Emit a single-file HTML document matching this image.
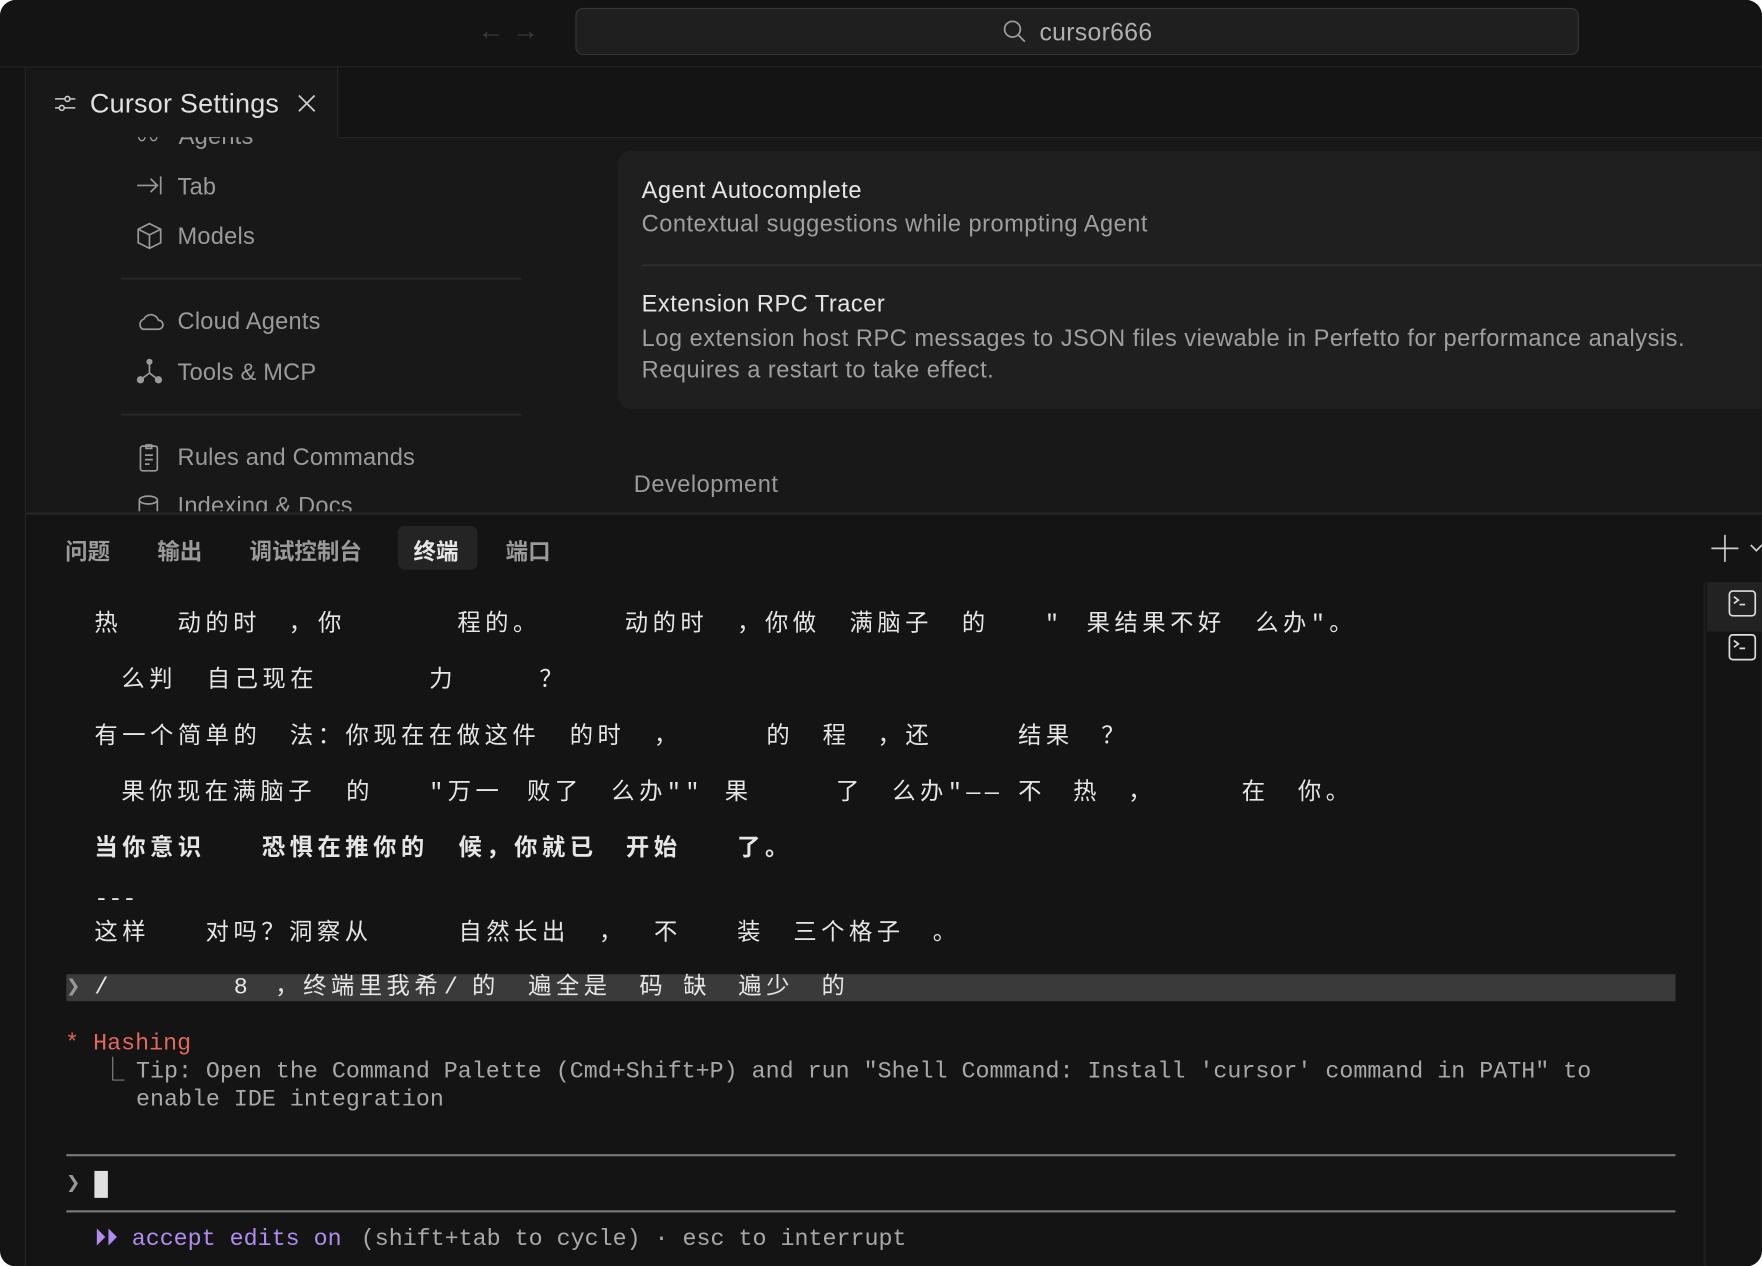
<!DOCTYPE html>
<html><head><meta charset="utf-8"><style>
html,body{margin:0;padding:0;width:1762px;height:1266px;overflow:hidden;background:#fff}
#w{position:absolute;left:0;top:0;width:1568px;height:1127px;transform:scale(1.12372);transform-origin:0 0;background:#141414;border-radius:14px;overflow:hidden;font-family:"Liberation Sans","Noto Sans CJK SC",sans-serif}
.a{position:absolute;white-space:pre}
.t{font-family:"Liberation Mono","Noto Sans CJK SC",monospace;font-size:20.75px;color:#e6e6e6;line-height:24px}
.c{letter-spacing:4px}
.side{color:#9a9a9a;font-size:21px;letter-spacing:0.2px}
.d{font-size:21px;letter-spacing:0.45px}
svg{position:absolute}
</style></head><body><div id="w">
<div class="a" style="left:0;top:0;width:1568px;height:59px;background:#141414;border-bottom:1px solid #262626"></div>
<div class="a" style="left:425px;top:14px;color:#3c3c3c;font-size:24px">← →</div>
<div class="a" style="left:512px;top:7px;width:891px;height:40px;background:#1f1f1f;border:1px solid #363636;border-radius:7px"></div>
<svg style="left:892px;top:17px" width="22" height="22" viewBox="0 0 22 22"><circle cx="9" cy="9" r="7" fill="none" stroke="#9a9a9a" stroke-width="1.6"/><path d="M14 14l6 6" stroke="#9a9a9a" stroke-width="1.6"/></svg>
<div class="a" style="left:925px;top:16px;color:#b0b0b0;font-size:22px;letter-spacing:0.3px">cursor666</div>
<div class="a" style="left:22px;top:60px;width:1px;height:1067px;background:#262626"></div>
<div class="a" style="left:23px;top:60px;width:1545px;height:396px;background:#181818"></div>
<div class="a" style="left:300px;top:60px;width:1268px;height:62px;background:#141414;border-left:1px solid #262626;border-bottom:1px solid #262626"></div>
<svg style="left:48px;top:82px" width="20" height="20" viewBox="0 0 20 20" fill="none" stroke="#ccc" stroke-width="1.4"><path d="M1 6h18M1 14h18"/><circle cx="12" cy="6" r="2.2" fill="#181818"/><circle cx="7" cy="14" r="2.2" fill="#181818"/></svg>
<div class="a" style="left:80px;top:79px;color:#e0e0e0;font-size:24px;letter-spacing:0.2px">Cursor Settings</div>
<svg style="left:264px;top:83px" width="18" height="18"><path d="M2 2l14 14M16 2L2 16" stroke="#ccc" stroke-width="1.6"/></svg>
<div class="a" style="left:23px;top:122px;width:480px;height:334px;overflow:hidden">
 <div class="a side" style="left:136px;top:-12px">Agents</div>
 <div class="a side" style="left:98px;top:-14px">〰</div>
</div>
<svg style="left:121px;top:154px" width="24" height="22" fill="none" stroke="#999" stroke-width="1.5"><path d="M1 11h18M13 5l6 6-6 6M22 3v16"/></svg>
<div class="a side" style="left:158px;top:155px">Tab</div>
<svg style="left:121px;top:197px" width="24" height="26" fill="none" stroke="#999" stroke-width="1.5"><path d="M12 2l10 5v12l-10 5-10-5V7zM2 7l10 5 10-5M12 12v12"/></svg>
<div class="a side" style="left:158px;top:199px">Models</div>
<div class="a" style="left:108px;top:247px;width:356px;height:2px;background:#262626"></div>
<svg style="left:121px;top:276px" width="26" height="20" fill="none" stroke="#999" stroke-width="1.5"><path d="M6 17h14a4 4 0 0 0 0-8 7 7 0 0 0-13-1 5 5 0 0 0-1 9z"/></svg>
<div class="a side" style="left:158px;top:275px">Cloud Agents</div>
<svg style="left:121px;top:319px" width="26" height="24" fill="none" stroke="#999" stroke-width="1.5"><path d="M12 3v10M12 13l-8 6M12 13l8 6"/><circle cx="12" cy="3" r="2" fill="#999"/><circle cx="4" cy="19" r="2.5" fill="#999"/><circle cx="20" cy="19" r="2.5" fill="#999"/></svg>
<div class="a side" style="left:158px;top:320px">Tools &amp; MCP</div>
<div class="a" style="left:108px;top:368px;width:356px;height:2px;background:#262626"></div>
<svg style="left:121px;top:393px" width="24" height="28" fill="none" stroke="#999" stroke-width="1.5"><rect x="4" y="4" width="15" height="22" rx="2"/><path d="M9 3h5v3H9zM8 12h7M8 16h7M8 20h4"/></svg>
<div class="a side" style="left:158px;top:396px">Rules and Commands</div>
<div class="a" style="left:100px;top:434px;width:400px;height:21px;overflow:hidden">
 <div class="a side" style="left:58px;top:5px">Indexing &amp; Docs</div>
 <svg style="left:22px;top:6px" width="22" height="20" fill="none" stroke="#999" stroke-width="1.5"><ellipse cx="10" cy="5" rx="8" ry="3.5"/><path d="M2 5v12M18 5v12"/></svg>
</div>
<div class="a" style="left:550px;top:134px;width:1030px;height:230px;background:#1f1f1f;border-radius:12px"></div>
<div class="a d" style="left:571px;top:158px;color:#e6e6e6">Agent Autocomplete</div>
<div class="a d" style="left:571px;top:188px;color:#9f9f9f">Contextual suggestions while prompting Agent</div>
<div class="a" style="left:571px;top:235px;width:1000px;height:2px;background:#2c2c2c"></div>
<div class="a d" style="left:571px;top:259px;color:#e6e6e6">Extension RPC Tracer</div>
<div class="a d" style="left:571px;top:290px;color:#9f9f9f">Log extension host RPC messages to JSON files viewable in Perfetto for performance analysis.</div>
<div class="a d" style="left:571px;top:318px;color:#9f9f9f">Requires a restart to take effect.</div>
<div class="a d" style="left:564px;top:420px;color:#9a9a9a">Development</div>
<div class="a" style="left:23px;top:456px;width:1545px;height:2px;background:#262626"></div>
<div class="a" style="left:354px;top:468px;width:71px;height:39px;background:#242424;border-radius:6px"></div>
<div class="a" style="left:58px;top:475px;color:#9a9a9a;font-size:20px;font-weight:bold">问题</div>
<div class="a" style="left:140px;top:475px;color:#9a9a9a;font-size:20px;font-weight:bold">输出</div>
<div class="a" style="left:222px;top:475px;color:#9a9a9a;font-size:20px;font-weight:bold">调试控制台</div>
<div class="a" style="left:368px;top:475px;color:#e6e6e6;font-size:20px;font-weight:bold">终端</div>
<div class="a" style="left:450px;top:475px;color:#9a9a9a;font-size:20px;font-weight:bold">端口</div>
<svg style="left:1522px;top:475px" width="46" height="26" fill="none" stroke="#ccc" stroke-width="1.5"><path d="M13 1v24M1 13h24M36 10l5 5 5-5"/></svg>
<div class="a" style="left:1516px;top:518px;width:2px;height:609px;background:#1e1e1e"></div>
<div class="a" style="left:1519px;top:518px;width:49px;height:44px;background:#222"></div>
<svg style="left:1538px;top:525px" width="26" height="24" fill="none" stroke="#ddd" stroke-width="1.5"><rect x="1" y="1" width="23" height="22" rx="3"/><path d="M5 6l4 3-4 3M10 13h5"/></svg>
<svg style="left:1538px;top:564px" width="26" height="24" fill="none" stroke="#ddd" stroke-width="1.5"><rect x="1" y="1" width="23" height="22" rx="3"/><path d="M5 6l4 3-4 3M10 13h5"/></svg>
<div class="t c">
<span class="a" style="left:84px;top:545px">热</span><span class="a" style="left:158px;top:545px">动的时</span><span class="a" style="left:257px;top:545px">，</span><span class="a" style="left:283px;top:545px">你</span><span class="a" style="left:407px;top:545px">程的。</span><span class="a" style="left:556px;top:545px">动的时</span><span class="a" style="left:656px;top:545px">，你做</span><span class="a" style="left:756px;top:545px">满脑子</span><span class="a" style="left:856px;top:545px">的</span><span class="a" style="left:930px;top:545px">"</span><span class="a" style="left:967px;top:545px">果结果不好</span><span class="a" style="left:1117px;top:545px">么办"。</span>
<span class="a" style="left:108px;top:595px">么判</span><span class="a" style="left:184px;top:595px">自己现在</span><span class="a" style="left:382px;top:595px">力</span><span class="a" style="left:480px;top:595px">？</span>
<span class="a" style="left:84px;top:645px">有一个简单的</span><span class="a" style="left:258px;top:645px">法：你现在在做这件</span><span class="a" style="left:507px;top:645px">的时</span><span class="a" style="left:582px;top:645px">，</span><span class="a" style="left:682px;top:645px">的</span><span class="a" style="left:732px;top:645px">程</span><span class="a" style="left:781px;top:645px">，还</span><span class="a" style="left:906px;top:645px">结果</span><span class="a" style="left:980px;top:645px">？</span>
<span class="a" style="left:108px;top:695px">果你现在满脑子</span><span class="a" style="left:308px;top:695px">的</span><span class="a" style="left:382px;top:695px">"万一</span><span class="a" style="left:469px;top:695px">败了</span><span class="a" style="left:544px;top:695px">么办""</span><span class="a" style="left:645px;top:695px">果</span><span class="a" style="left:744px;top:695px">了</span><span class="a" style="left:794px;top:695px">么办"——</span><span class="a" style="left:906px;top:695px">不</span><span class="a" style="left:955px;top:695px">热</span><span class="a" style="left:1004px;top:695px">，</span><span class="a" style="left:1105px;top:695px">在</span><span class="a" style="left:1155px;top:695px">你。</span>
<span style="font-weight:bold"><span class="a" style="left:84px;top:745px">当你意识</span><span class="a" style="left:233px;top:745px">恐惧在推你的</span><span class="a" style="left:408px;top:745px">候，你就已</span><span class="a" style="left:557px;top:745px">开始</span><span class="a" style="left:656px;top:745px">了。</span></span>
<span class="a" style="left:84px;top:790px;letter-spacing:0">---</span>
<span class="a" style="left:84px;top:820px">这样</span><span class="a" style="left:183px;top:820px">对吗？洞察从</span><span class="a" style="left:408px;top:820px">自然长出</span><span class="a" style="left:533px;top:820px">，</span><span class="a" style="left:582px;top:820px">不</span><span class="a" style="left:656px;top:820px">装</span><span class="a" style="left:706px;top:820px">三个格子</span><span class="a" style="left:830px;top:820px">。</span>
</div>
<div class="a" style="left:59px;top:867px;width:1432px;height:24px;background:#3a3a3a"></div>
<div class="t c">
<span class="a" style="left:59px;top:868px;color:#999;letter-spacing:0">❯</span><span class="a" style="left:84px;top:868px;letter-spacing:0">/</span><span class="a" style="left:208px;top:868px">8</span><span class="a" style="left:245px;top:868px">，终端里我希</span><span class="a" style="left:395px;top:868px;letter-spacing:0">/</span><span class="a" style="left:420px;top:868px">的</span><span class="a" style="left:470px;top:868px">遍全是</span><span class="a" style="left:569px;top:868px">码</span><span class="a" style="left:608px;top:868px">缺</span><span class="a" style="left:657px;top:868px">遍少</span><span class="a" style="left:731px;top:868px">的</span>
</div>
<div class="t">
<span class="a" style="left:58px;top:918px;color:#e0685c">* Hashing</span>
<span class="a" style="left:90px;top:943px;color:#9a9a9a">⎿</span>
<span class="a" style="left:121px;top:943px;color:#a8a8a8">Tip: Open the Command Palette (Cmd+Shift+P) and run "Shell Command: Install 'cursor' command in PATH" to</span>
<span class="a" style="left:121px;top:968px;color:#a8a8a8">enable IDE integration</span>
</div>
<div class="a" style="left:59px;top:1027px;width:1432px;height:2px;background:#777"></div>
<div class="a t" style="left:59px;top:1043px;color:#999">❯</div>
<div class="a" style="left:84px;top:1042px;width:12px;height:24px;background:#e0e0e0"></div>
<div class="a" style="left:59px;top:1077px;width:1432px;height:2px;background:#777"></div>
<div class="t"><span class="a" style="left:84px;top:1092px;color:#b08cf0">⏵⏵ accept edits on</span><span class="a" style="left:321px;top:1092px;color:#a8a8a8">(shift+tab to cycle) · esc to interrupt</span></div>
</div></body></html>
